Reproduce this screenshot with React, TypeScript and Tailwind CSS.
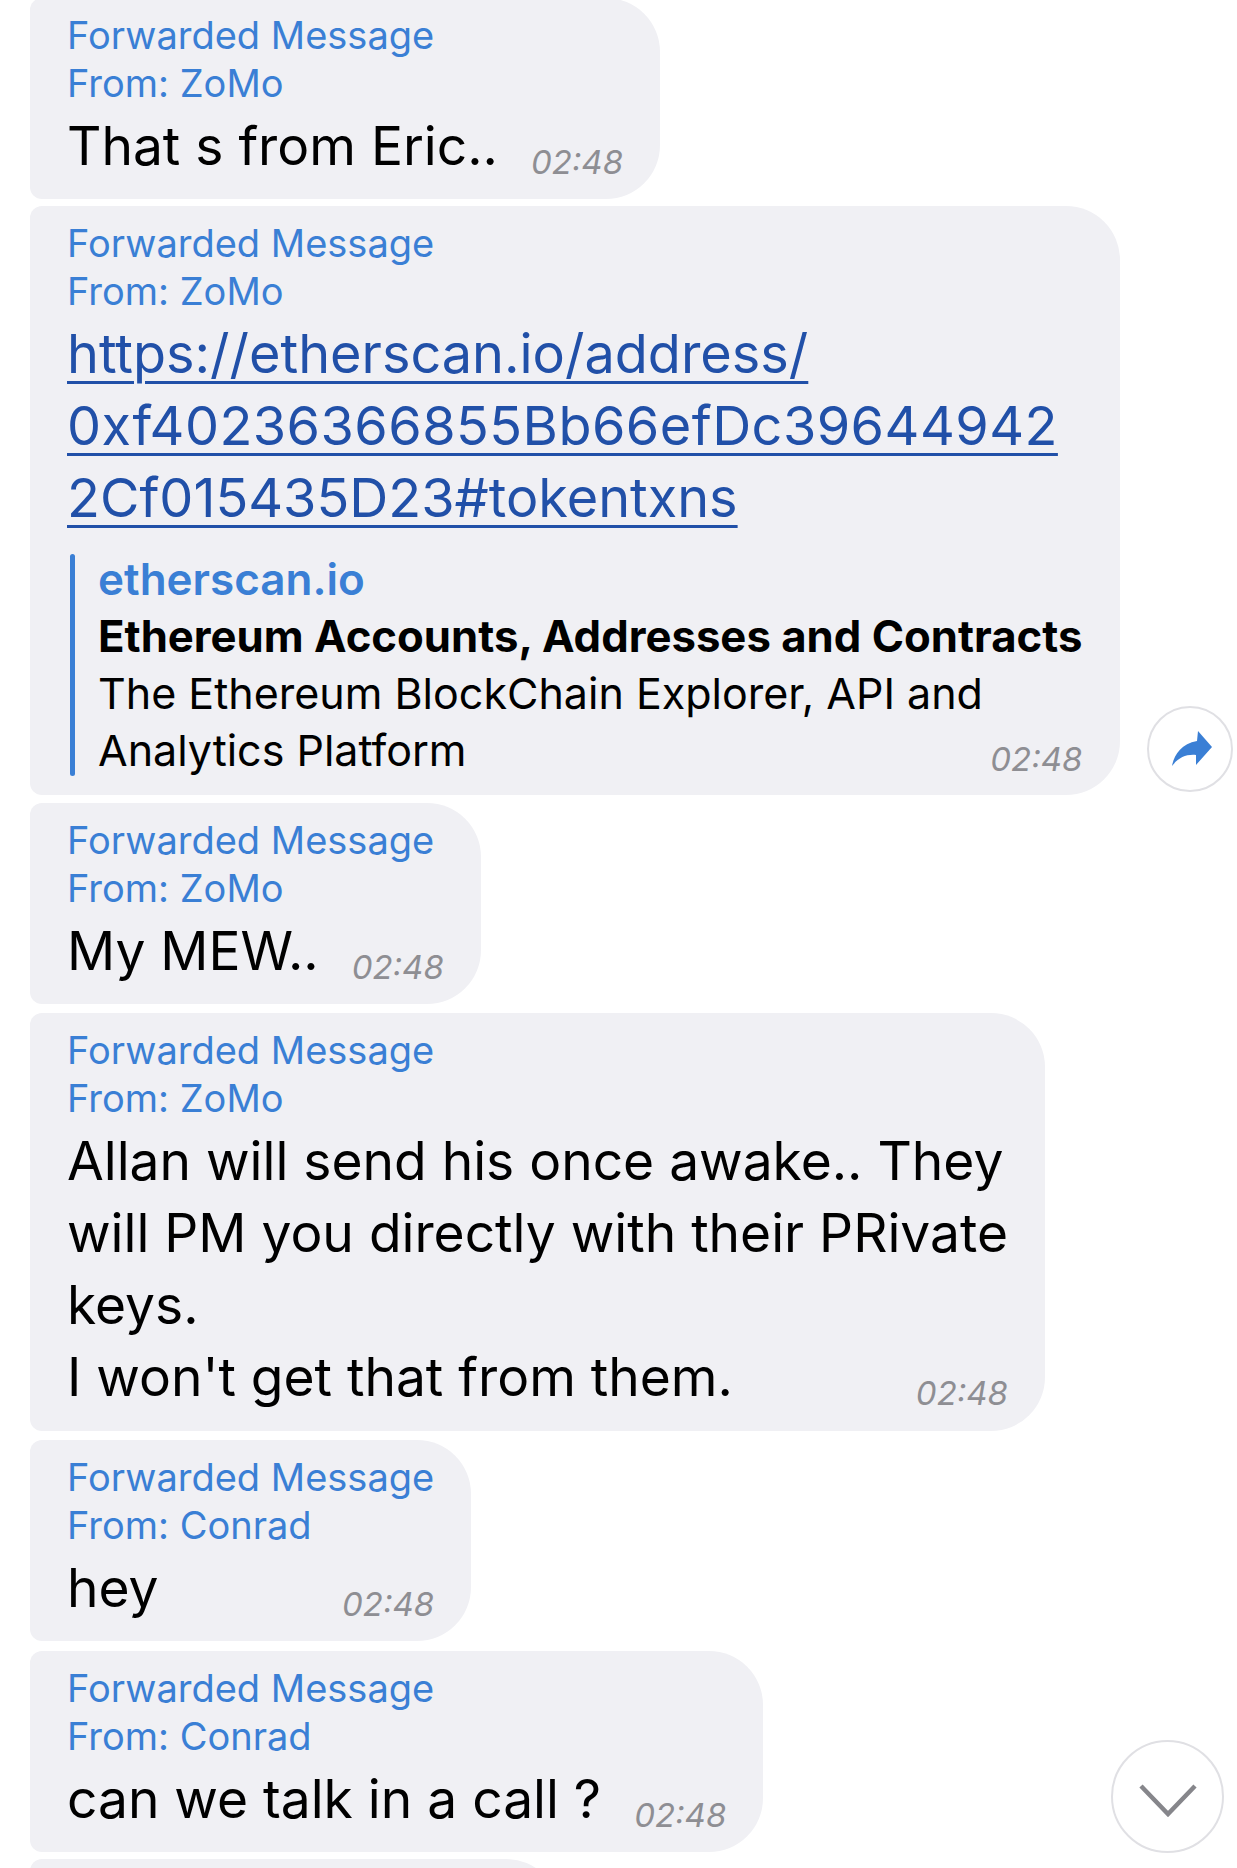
import type { ReactNode } from 'react';

const sans = "font-['Inter','Noto_Sans',sans-serif]";

const Header = ({ from }: { from: string }) => (
  <div className="whitespace-nowrap text-[38px] leading-[48px] text-[#3a7fd5]">
    <div>Forwarded Message</div>
    <div>From: {from}</div>
  </div>
);

const Time = () => (
  <span className="mb-[2px] ml-auto shrink-0 pl-[33px] text-[33px] italic leading-[36px] text-[#8e8e93]">
    02:48
  </span>
);

const Bubble = ({
  from,
  lines,
  className = '',
}: {
  from: string;
  lines: string[];
  className?: string;
}) => {
  const last = lines[lines.length - 1];
  return (
    <div
      className={`flex w-fit flex-col rounded-l-[12px] rounded-r-[54px] bg-[#f0f0f4] pb-[17px] pl-[37px] pr-[37px] pt-[13px] ${className}`}
    >
      <Header from={from} />
      <div className="mt-[3px] text-[53.3px] leading-[72px] text-black">
        {lines.slice(0, -1).map((line) => (
          <div key={line} className="whitespace-nowrap">
            {line}
          </div>
        ))}
        <div className="flex items-end whitespace-nowrap">
          <span>{last}</span>
          <Time />
        </div>
      </div>
    </div>
  );
};

const Circle = ({ className, children }: { className: string; children: ReactNode }) => (
  <div
    className={`flex shrink-0 items-center justify-center rounded-full border-2 border-[#e0e0e4] bg-white ${className}`}
  >
    {children}
  </div>
);

const linkLines = [
  'https://etherscan.io/address/',
  '0xf40236366855Bb66efDc39644942',
  '2Cf015435D23#tokentxns',
];

export default function App() {
  return (
    <div className={`relative h-[1868px] w-[1237px] overflow-hidden bg-white ${sans}`}>
      <div className="-mt-[2px] flex flex-col pl-[30px]">
        <Bubble from="ZoMo" lines={['That s from Eric..']} />

        <div className="mt-[7px] flex items-end gap-[27px]">
          <div className="flex w-fit flex-col rounded-l-[12px] rounded-r-[54px] bg-[#f0f0f4] pb-[16px] pl-[37px] pr-[38px] pt-[13px]">
            <Header from="ZoMo" />
            <div className="mt-[3px] text-[54px] leading-[72px] text-[#2150a8]">
              {linkLines.map((line, i) => (
                <div key={line} className="whitespace-nowrap">
                  <span
                    className={`underline decoration-[3px] underline-offset-[8px] ${i === 1 ? 'tracking-[0.45px]' : ''}`}
                  >
                    {line}
                  </span>
                </div>
              ))}
            </div>
            <div className="mt-[17px] flex">
              <div className="my-[3px] ml-[3px] w-[5px] shrink-0 rounded-full bg-[#3a7fd5]" />
              <div className="pl-[23px] text-[43px] leading-[57px] text-black">
                <div className="text-[44px] font-semibold text-[#3a7fd5]">etherscan.io</div>
                <div className="whitespace-nowrap text-[43.7px] font-bold">
                  Ethereum Accounts, Addresses and Contracts
                </div>
                <div className="whitespace-nowrap">The Ethereum BlockChain Explorer, API and</div>
                <div className="flex items-end whitespace-nowrap">
                  <span>Analytics Platform</span>
                  <Time />
                </div>
              </div>
            </div>
          </div>
          <Circle className="mb-[3px] h-[86px] w-[86px]">
            <svg width="40" height="36" viewBox="0 0 40 36" className="ml-[4px]">
              <path
                d="M26 0 L40 16 L24 34 L24 24 C14 23 6 27 0 35 C2 24 9 13 25 10 Z"
                fill="#3a7fd5"
              />
            </svg>
          </Circle>
        </div>

        <Bubble className="mt-[8px]" from="ZoMo" lines={['My MEW..']} />

        <Bubble
          className="mt-[9px] pb-[18px]"
          from="ZoMo"
          lines={[
            'Allan will send his once awake.. They',
            'will PM you directly with their PRivate',
            'keys.',
            "I won't get that from them.",
          ]}
        />

        <Bubble className="mt-[9px]" from="Conrad" lines={['hey']} />

        <Bubble className="mt-[10px]" from="Conrad" lines={['can we talk in a call ?']} />

        <div className="mt-[7px] h-[200px] w-[530px] rounded-l-[12px] rounded-r-[54px] bg-[#f0f0f4]" />
      </div>

      <Circle className="absolute left-[1111px] top-[1740px] h-[113px] w-[113px]">
        <svg width="60" height="34" viewBox="0 0 60 34" className="mt-[6px]">
          <polyline
            points="3,3 30,31 57,3"
            fill="none"
            stroke="#86868b"
            strokeWidth="4.5"
          />
        </svg>
      </Circle>
    </div>
  );
}
